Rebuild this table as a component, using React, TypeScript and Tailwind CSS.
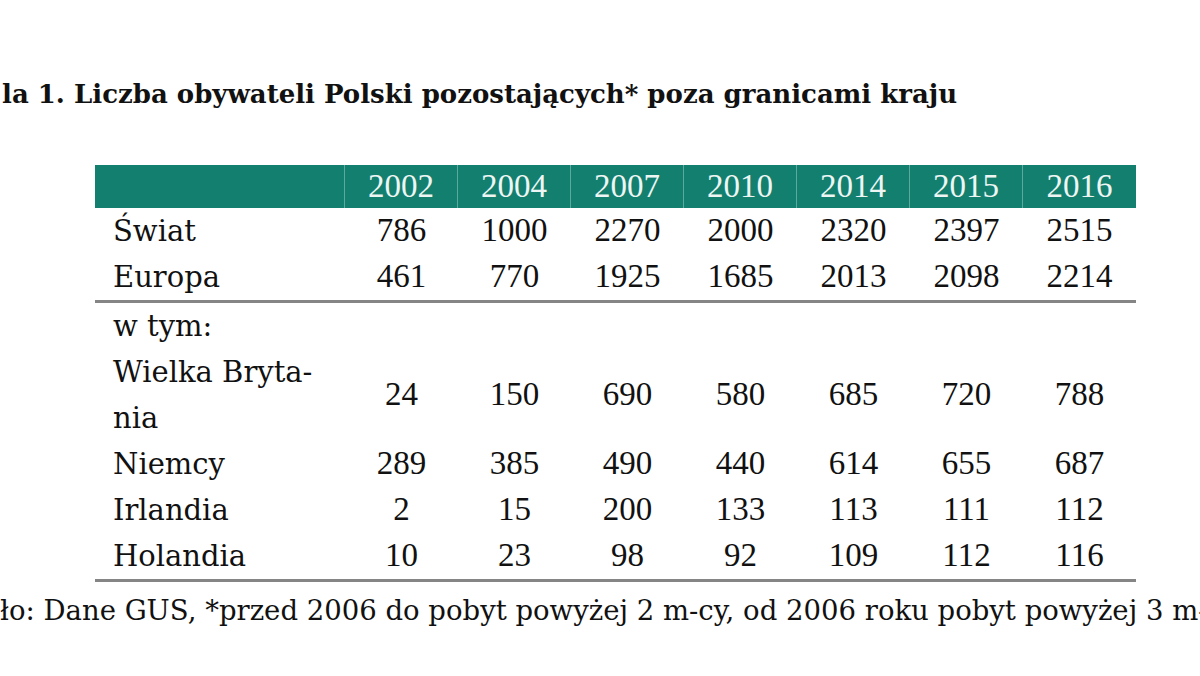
import React from "react";

const years = ["2002", "2004", "2007", "2010", "2014", "2015", "2016"];
const top = [
  { label: "Świat", v: ["786", "1000", "2270", "2000", "2320", "2397", "2515"] },
  { label: "Europa", v: ["461", "770", "1925", "1685", "2013", "2098", "2214"] },
];
const bottom = [
  { label: "Niemcy", v: ["289", "385", "490", "440", "614", "655", "687"] },
  { label: "Irlandia", v: ["2", "15", "200", "133", "113", "111", "112"] },
  { label: "Holandia", v: ["10", "23", "98", "92", "109", "112", "116"] },
];

const labelFont = { fontFamily: '"DejaVu Serif", serif' };
const numFont = { fontFamily: '"Liberation Serif", serif' };

function Row({ label, v, h = "h-[46px]" }: { label: React.ReactNode; v: string[]; h?: string }) {
  return (
    <div className={`flex ${h} items-center text-[#111]`}>
      <div className="w-[250px] pl-[18px] text-[29px] leading-[46px]" style={labelFont}>
        {label}
      </div>
      {v.map((x, i) => (
        <div key={i} className="w-[113px] text-center text-[33px]" style={numFont}>
          {x}
        </div>
      ))}
    </div>
  );
}

export default function App() {
  return (
    <div className="w-[1200px] h-[676px] bg-white overflow-hidden relative">
      <div
        className="pt-[76px] pl-[2px] whitespace-nowrap text-[26px] font-bold text-[#111] leading-[36px]"
        style={labelFont}
      >
        la 1. Liczba obywateli Polski pozostających* poza granicami kraju
      </div>
      <div className="ml-[95px] mt-[53px] w-[1041px]">
        <div className="flex h-[43px] bg-[#13806f] text-[#eef6f4]">
          <div className="w-[250px] border-r border-[#5ea99d]" />
          {years.map((y, i) => (
            <div
              key={y}
              className={`w-[113px] flex items-center justify-center text-[33px] ${i < 6 ? "border-r border-[#5ea99d]" : ""}`}
              style={numFont}
            >
              {y}
            </div>
          ))}
        </div>
        {top.map((r) => (
          <Row key={r.label} {...r} />
        ))}
        <div className="h-[3px] bg-[#858585]" />
        <div className="h-[46px] pl-[18px] text-[29px] leading-[46px] text-[#111]" style={labelFont}>
          w tym:
        </div>
        <Row
          h="h-[92px]"
          label={
            <span>
              Wielka Bryta-
              <br />
              nia
            </span>
          }
          v={["24", "150", "690", "580", "685", "720", "788"]}
        />
        {bottom.map((r) => (
          <Row key={r.label} {...r} />
        ))}
        <div className="h-[3px] bg-[#858585]" />
      </div>
      <div
        className="mt-[11px] whitespace-nowrap text-[27.5px] leading-[34px] text-[#111]"
        style={labelFont}
      >
        ło: Dane GUS, *przed 2006 do pobyt powyżej 2 m-cy, od 2006 roku pobyt powyżej 3 m-cy
      </div>
    </div>
  );
}
